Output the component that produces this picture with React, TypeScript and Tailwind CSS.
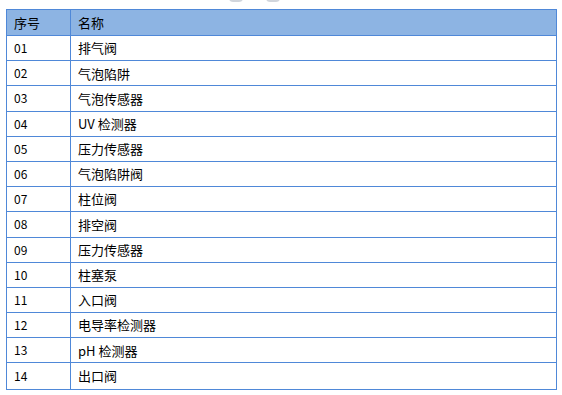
const rows: [string, string][] = [
  ["01", "排气阀"],
  ["02", "气泡陷阱"],
  ["03", "气泡传感器"],
  ["04", "UV 检测器"],
  ["05", "压力传感器"],
  ["06", "气泡陷阱阀"],
  ["07", "柱位阀"],
  ["08", "排空阀"],
  ["09", "压力传感器"],
  ["10", "柱塞泵"],
  ["11", "入口阀"],
  ["12", "电导率检测器"],
  ["13", "pH 检测器"],
  ["14", "出口阀"],
];

export default function App() {
  return (
    <div
      className="relative w-[562px] h-[395px] bg-white overflow-hidden"
      style={{ fontFamily: '"Noto Sans CJK SC", "Liberation Sans", sans-serif' }}
    >
      {/* clipped shapes above the table */}
      <div className="absolute left-[229px] -top-[6px] w-[14px] h-[8px] rounded-full bg-gray-300" />
      <div className="absolute left-[266px] -top-[6px] w-[14px] h-[8px] rounded-full bg-gray-300" />

      <div className="pt-[9px] pl-[6px]">
        <div className="w-[551px] border border-[#4f88d8] text-[13px] text-black">
          <div className="flex h-[26px] items-center bg-[#8db4e3] border-b border-[#4f88d8]">
            <div className="w-[64px] h-full flex items-center pl-[7px] border-r border-[#4f88d8]">序号</div>
            <div className="flex-1 pl-[7px]">名称</div>
          </div>
          {rows.map(([n, name], i) => (
            <div
              key={n}
              className={`flex h-[25.2px] items-center ${i < rows.length - 1 ? "border-b border-[#4f88d8]" : ""}`}
            >
              <div className="w-[64px] h-full flex items-center pl-[7px] border-r border-[#4f88d8] text-[12px]">{n}</div>
              <div className="flex-1 pl-[7px]">{name}</div>
            </div>
          ))}
        </div>
      </div>
    </div>
  );
}
